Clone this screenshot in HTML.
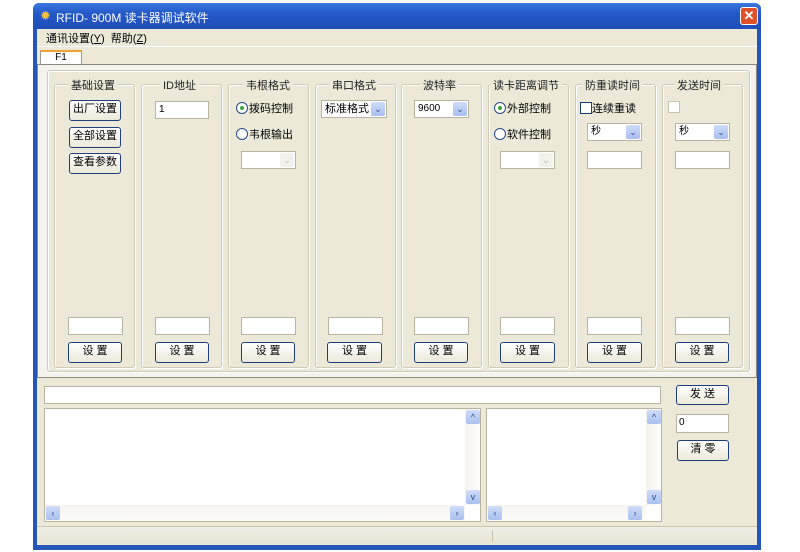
<!DOCTYPE html>
<html><head><meta charset="utf-8"><style>
*{box-sizing:border-box;margin:0;padding:0}
body{width:800px;height:552px;background:#fff;position:relative;overflow:hidden;font-family:"Liberation Sans","Noto Sans CJK SC",sans-serif;font-size:11px;color:#000}
.a{position:absolute}
.win{left:33px;top:3px;width:728px;height:547px;background:#2456b8;border-radius:6px 6px 0 0}
.title{left:33px;top:3px;width:728px;height:26px;background:linear-gradient(#3a78e0,#2458c8 40%,#1f4fb8);border-radius:6px 6px 0 0}
.body{left:37px;top:29px;width:720px;height:516px;background:#ece9d8}
.grp{border:1px solid #cfcbb8;border-radius:3px;box-shadow:inset 1px 1px 0 #fff,1px 1px 0 #fff}
.lbl{background:#ece9d8;padding:0 3px;font-size:11px;color:#222}
.inp{background:#fff;border:1px solid #b8b4a0}
.btn{background:linear-gradient(#fff,#ece9d8);border:1px solid #1f3f7a;border-radius:3px;text-align:center;font-size:11px;line-height:17px}
.cb{background:#fff;border:1px solid #b8b4a0;font-size:10px;padding-left:3px;line-height:16px}
.arr{position:absolute;right:1px;top:1px;width:14px;height:14px;background:linear-gradient(#cfdcfa,#a8bff0);border-radius:2px;color:#36529a;font-size:9px;line-height:14px;text-align:center}
.dis .arr{background:#f2f1ea;color:#bbb}
.radio{display:inline-block;width:12px;height:12px;border:1px solid #2a4a8a;border-radius:50%;background:#fff;vertical-align:-2px;margin-right:1px;position:relative}
.sb{background:linear-gradient(#cfdcfa,#a9c0ef);border-radius:2px;width:14px;height:14px;color:#2a4a8a;font-size:9px;text-align:center;line-height:14px}
</style></head><body>
<div class="a win"></div>
<div class="a title"></div>
<div class="a" style="left:40px;top:8px;color:#f5c040;font-size:13px">✹</div>
<div class="a" style="left:56px;top:9px;color:#fff;font-size:12px">RFID- 900M 读卡器调试软件</div>
<div class="a" style="left:740px;top:7px;width:18px;height:18px;background:#e0502a;border:1px solid #fff;border-radius:3px;color:#fff;text-align:center;font-size:13px;line-height:16px;font-weight:bold">✕</div>
<div class="a body"></div>
<div class="a" style="left:46px;top:30px;font-size:11px">通讯设置(<u>Y</u>)&nbsp; 帮助(<u>Z</u>)</div>
<div class="a" style="left:37px;top:46px;width:720px;height:1px;background:#fff"></div>
<div class="a" style="left:40px;top:50px;width:42px;height:15px;background:#fff;border:1px solid #999;border-top:2px solid #f0a030;border-bottom:none;text-align:center;font-size:10px;line-height:12px">F1</div>
<div class="a" style="left:37px;top:64px;width:720px;height:314px;border:1px solid #8c8a7c;background:#f4f3ee"></div>
<div class="a grp" style="left:47px;top:70px;width:703px;height:302px;background:#ece9d8"></div>

<!-- groups -->
<div class="a grp" style="left:54px;top:84px;width:81px;height:284px"></div>
<div class="a grp" style="left:141px;top:84px;width:81px;height:284px"></div>
<div class="a grp" style="left:228px;top:84px;width:81px;height:284px"></div>
<div class="a grp" style="left:315px;top:84px;width:81px;height:284px"></div>
<div class="a grp" style="left:401px;top:84px;width:81px;height:284px"></div>
<div class="a grp" style="left:488px;top:84px;width:81px;height:284px"></div>
<div class="a grp" style="left:575px;top:84px;width:81px;height:284px"></div>
<div class="a grp" style="left:662px;top:84px;width:81px;height:284px"></div>

<div class="a lbl" style="left:68px;top:77px">基础设置</div>
<div class="a lbl" style="left:160px;top:77px">ID地址</div>
<div class="a lbl" style="left:243px;top:77px">韦根格式</div>
<div class="a lbl" style="left:329px;top:77px">串口格式</div>
<div class="a lbl" style="left:420px;top:77px">波特率</div>
<div class="a lbl" style="left:490px;top:77px">读卡距离调节</div>
<div class="a lbl" style="left:582px;top:77px">防重读时间</div>
<div class="a lbl" style="left:674px;top:77px">发送时间</div>

<div class="a btn" style="left:69px;top:100px;width:52px;height:21px">出厂设置</div>
<div class="a btn" style="left:69px;top:127px;width:52px;height:21px">全部设置</div>
<div class="a btn" style="left:69px;top:153px;width:52px;height:21px">查看参数</div>

<div class="a inp" style="left:155px;top:101px;width:54px;height:18px;font-size:10px;padding:2px 3px">1</div>

<div class="a" style="left:236px;top:100px"><span class="radio"><span style="position:absolute;left:3px;top:3px;width:4px;height:4px;border-radius:50%;background:#3a3"></span></span>拨码控制</div>
<div class="a" style="left:236px;top:126px"><span class="radio"></span>韦根输出</div>
<div class="a cb dis" style="left:241px;top:151px;width:55px;height:18px"><span class="arr">⌄</span></div>

<div class="a cb" style="left:321px;top:100px;width:66px;height:18px;font-size:11px">标准格式<span class="arr">⌄</span></div>
<div class="a cb" style="left:414px;top:100px;width:55px;height:18px">9600<span class="arr">⌄</span></div>

<div class="a" style="left:494px;top:100px"><span class="radio"><span style="position:absolute;left:3px;top:3px;width:4px;height:4px;border-radius:50%;background:#3a3"></span></span>外部控制</div>
<div class="a" style="left:494px;top:126px"><span class="radio"></span>软件控制</div>
<div class="a cb dis" style="left:500px;top:151px;width:55px;height:18px"><span class="arr">⌄</span></div>

<div class="a" style="left:580px;top:100px"><span style="display:inline-block;width:12px;height:12px;border:1px solid #1f3f7a;background:#fff;vertical-align:-2px"></span>连续重读</div>
<div class="a cb" style="left:587px;top:123px;width:55px;height:18px">秒<span class="arr">⌄</span></div>
<div class="a inp" style="left:587px;top:151px;width:55px;height:18px"></div>

<div class="a" style="left:668px;top:101px;width:12px;height:12px;border:1px solid #c8c4b0;background:#fff"></div>
<div class="a cb" style="left:675px;top:123px;width:55px;height:18px">秒<span class="arr">⌄</span></div>
<div class="a inp" style="left:675px;top:151px;width:55px;height:18px"></div>

<!-- bottom inputs & buttons -->
<div class="a inp" style="left:68px;top:317px;width:55px;height:18px"></div>
<div class="a inp" style="left:155px;top:317px;width:55px;height:18px"></div>
<div class="a inp" style="left:241px;top:317px;width:55px;height:18px"></div>
<div class="a inp" style="left:328px;top:317px;width:55px;height:18px"></div>
<div class="a inp" style="left:414px;top:317px;width:55px;height:18px"></div>
<div class="a inp" style="left:500px;top:317px;width:55px;height:18px"></div>
<div class="a inp" style="left:587px;top:317px;width:55px;height:18px"></div>
<div class="a inp" style="left:675px;top:317px;width:55px;height:18px"></div>

<div class="a btn" style="left:68px;top:342px;width:54px;height:21px">设 置</div>
<div class="a btn" style="left:155px;top:342px;width:54px;height:21px">设 置</div>
<div class="a btn" style="left:241px;top:342px;width:54px;height:21px">设 置</div>
<div class="a btn" style="left:327px;top:342px;width:55px;height:21px">设 置</div>
<div class="a btn" style="left:414px;top:342px;width:54px;height:21px">设 置</div>
<div class="a btn" style="left:500px;top:342px;width:55px;height:21px">设 置</div>
<div class="a btn" style="left:587px;top:342px;width:55px;height:21px">设 置</div>
<div class="a btn" style="left:675px;top:342px;width:54px;height:21px">设 置</div>

<!-- lower area -->
<div class="a inp" style="left:44px;top:386px;width:617px;height:18px"></div>
<div class="a btn" style="left:676px;top:385px;width:53px;height:20px">发 送</div>
<div class="a inp" style="left:676px;top:414px;width:53px;height:19px;font-size:10px;padding:2px 2px">0</div>
<div class="a btn" style="left:677px;top:440px;width:52px;height:21px">清 零</div>

<div class="a inp" style="left:44px;top:408px;width:437px;height:114px"></div>
<div class="a" style="left:465px;top:409px;width:15px;height:96px;background:linear-gradient(90deg,#f4f3ee,#fdfdfb)"></div>
<div class="a" style="left:45px;top:505px;width:420px;height:16px;background:linear-gradient(#f4f3ee,#fdfdfb)"></div>
<div class="a sb" style="left:466px;top:410px">^</div>
<div class="a sb" style="left:466px;top:490px">v</div>
<div class="a sb" style="left:46px;top:506px">‹</div>
<div class="a sb" style="left:450px;top:506px">›</div>

<div class="a inp" style="left:486px;top:408px;width:176px;height:114px"></div>
<div class="a" style="left:646px;top:409px;width:15px;height:96px;background:linear-gradient(90deg,#f4f3ee,#fdfdfb)"></div>
<div class="a" style="left:487px;top:505px;width:159px;height:16px;background:linear-gradient(#f4f3ee,#fdfdfb)"></div>
<div class="a sb" style="left:647px;top:410px">^</div>
<div class="a sb" style="left:647px;top:490px">v</div>
<div class="a sb" style="left:488px;top:506px">‹</div>
<div class="a sb" style="left:628px;top:506px">›</div>

<div class="a" style="left:37px;top:526px;width:720px;height:18px;border-top:1px solid #c8c4b0;background:linear-gradient(#f0efe6,#e8e5d4)"></div>
<div class="a" style="left:492px;top:530px;width:1px;height:12px;background:#c8c4b0"></div>
</body></html>
